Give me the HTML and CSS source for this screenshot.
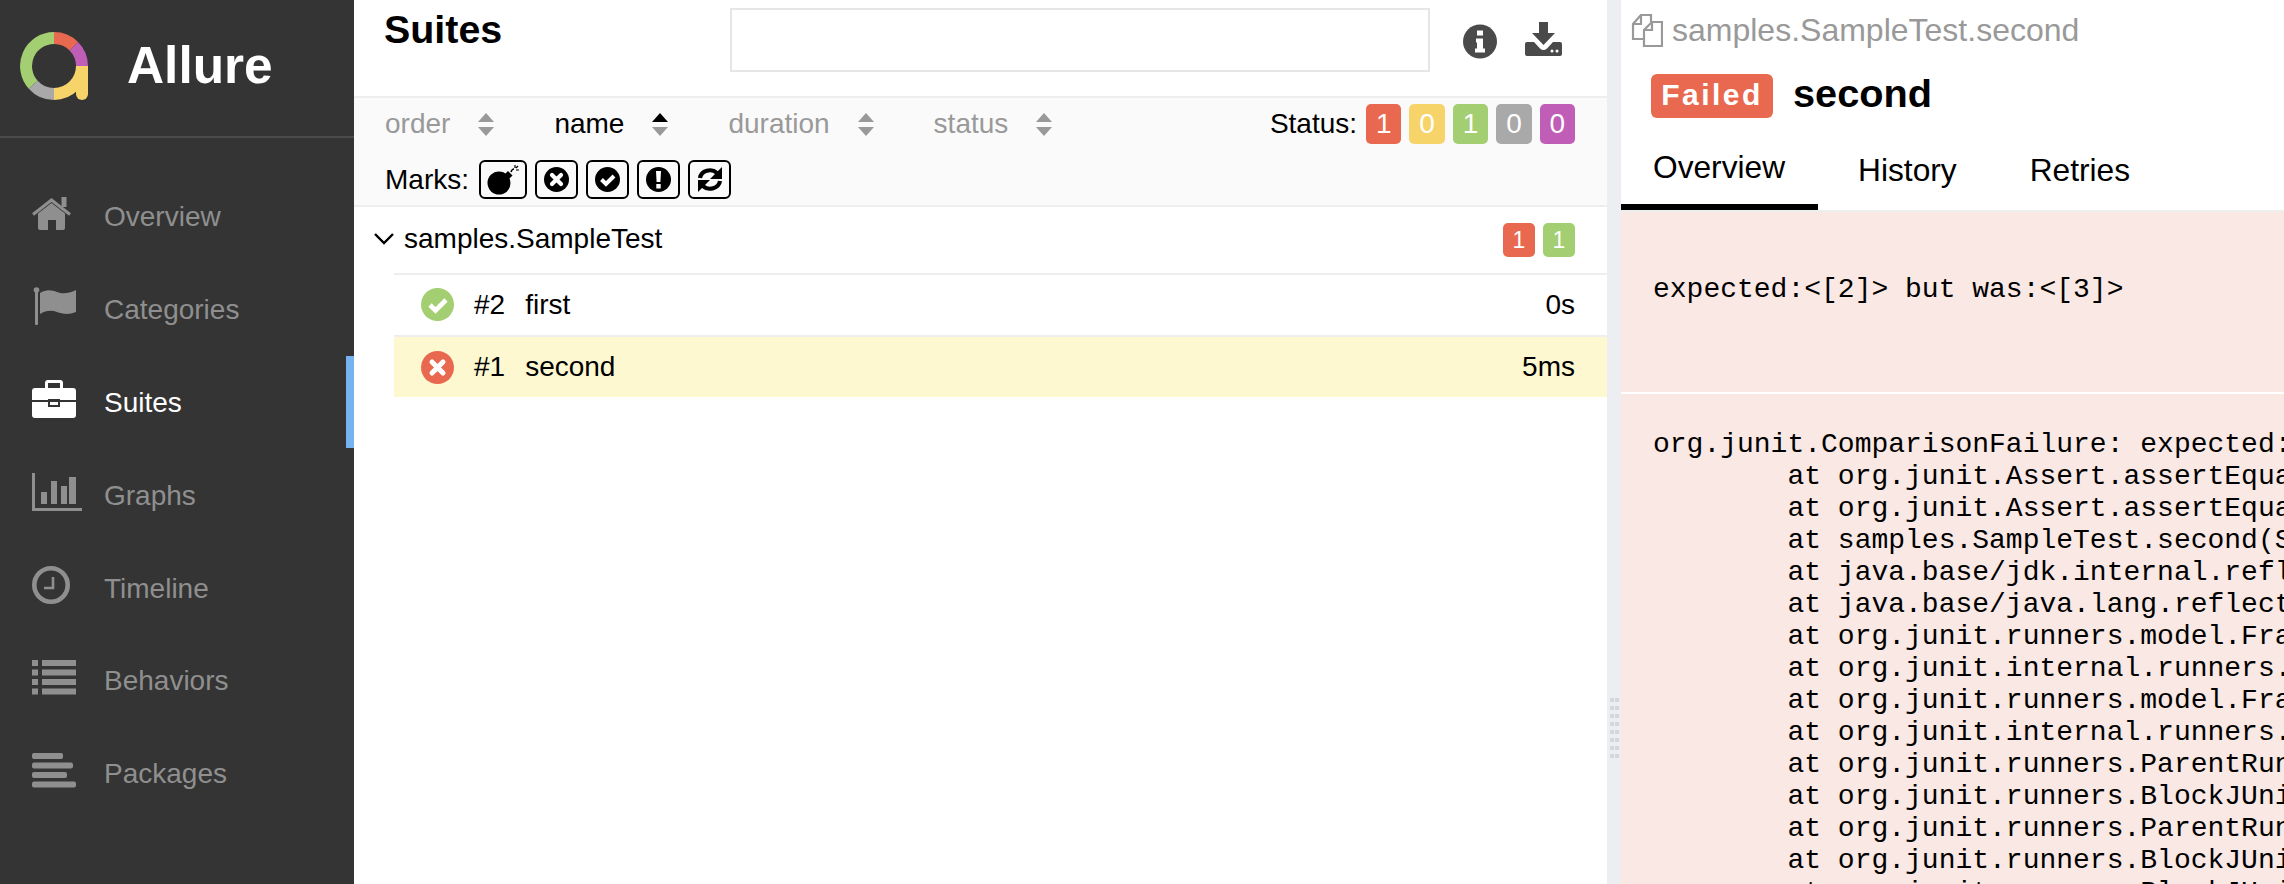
FILE: index.html
```html
<!DOCTYPE html>
<html lang="en">
<head>
<meta charset="utf-8">
<title>Allure</title>
<link rel="stylesheet" href="styles.css">
</head>
<body>
<div class="app">
  <aside class="side">
    <div class="brand">
      <svg class="logo" viewBox="0 0 68 68" fill="none" stroke-width="12">
        <path d="M34 6A28 28 0 0 0 13.2 52.7" stroke="#a3ce71"/>
        <path d="M13.2 52.7A28 28 0 0 0 34 62" stroke="#a9a9a9"/>
        <path d="M34 6A28 28 0 0 1 53.8 14.2" stroke="#e96950"/>
        <path d="M53.8 14.2A28 28 0 0 1 62 34" stroke="#c05db7"/>
        <path d="M62 34A28 28 0 0 1 34 62" stroke="#f7d46a"/>
        <path d="M56 34h12v28a6 6 0 0 1-12 0z" fill="#f7d46a" stroke="none"/>
      </svg>
      <span class="brand-name">Allure</span>
    </div>
    <nav class="nav">
      <a class="nav-item">
        <span class="nav-icon"><svg width="39" height="33" viewBox="0 0 39 33" fill="currentColor"><path d="M6 16.500 19.500 6 33 16.500V31a2 2 0 0 1-2 2H24V23H16V33H8a2 2 0 0 1-2-2z"/><path d="M1 17.500 19.500 3 38 17.500" fill="none" stroke="currentColor" stroke-width="3"/><rect x="29.500" width="5" height="10"/></svg></span>
        <span>Overview</span>
      </a>
      <a class="nav-item">
        <span class="nav-icon"><svg width="44" height="38" viewBox="0 0 44 38" fill="currentColor"><circle cx="4.500" cy="3" r="2.800"/><rect x="3" y="3" width="3" height="35" rx="1"/><path d="M8 6C14 2 20 3 25 5S36 7 44 3V25C37 28 30 27 25 25S14 23 8 27Z"/></svg></span>
        <span>Categories</span>
      </a>
      <a class="nav-item active">
        <span class="nav-icon"><svg width="44" height="38" viewBox="0 0 44 38" fill="currentColor"><path d="M13 9V3a3 3 0 0 1 3-3h12a3 3 0 0 1 3 3v6h-3V3H16v6z"/><path d="M3 8h38a3 3 0 0 1 3 3v9H28v-1H16v1H0v-9a3 3 0 0 1 3-3z"/><path d="M0 22h16v5h12v-5h16v13a3 3 0 0 1-3 3H3a3 3 0 0 1-3-3z"/><rect x="18" y="22" width="8" height="3"/></svg></span>
        <span>Suites</span>
      </a>
      <a class="nav-item">
        <span class="nav-icon"><svg width="50" height="38" viewBox="0 0 50 38" fill="currentColor"><path d="M0 0h3v35h47v3H0z"/><rect x="9" y="19" width="6" height="12"/><rect x="19" y="8" width="6" height="23"/><rect x="29" y="13" width="6" height="18"/><rect x="37" y="4" width="7" height="27"/></svg></span>
        <span>Graphs</span>
      </a>
      <a class="nav-item">
        <span class="nav-icon"><svg width="38" height="38" viewBox="0 0 38 38" fill="none" stroke="currentColor"><circle cx="19" cy="19" r="16.700" stroke-width="4.600"/><path d="M21 11V22H12" stroke-width="2.600"/></svg></span>
        <span>Timeline</span>
      </a>
      <a class="nav-item">
        <span class="nav-icon"><svg width="44" height="35" viewBox="0 0 44 35" fill="currentColor"><path d="M0 0h6v6H0zM10 0h34v6H10zM0 9.500h6v6H0zM10 9.500h34v6H10zM0 19h6v6H0zM10 19h34v6H10zM0 28.500h6v6H0zM10 28.500h34v6H10z"/></svg></span>
        <span>Behaviors</span>
      </a>
      <a class="nav-item">
        <span class="nav-icon"><svg width="44" height="35" viewBox="0 0 44 35" fill="currentColor"><rect width="31" height="6" rx="2"/><rect y="9.500" width="41" height="6" rx="2"/><rect y="19" width="35" height="6" rx="2"/><rect y="28.500" width="44" height="6" rx="2"/></svg></span>
        <span>Packages</span>
      </a>
    </nav>
  </aside>

  <main class="middle">
    <header class="mid-head">
      <h1 class="mid-title">Suites</h1>
      <div class="search"></div>
      <svg class="head-icon info" viewBox="0 0 34 34"><circle cx="17" cy="17" r="17" fill="#4a4a4a"/><path d="M13 14h7v10h2v4H12v-4h2v-6h-1zM14 6h6v5h-6z" fill="#fff"/></svg>
      <svg class="head-icon download" viewBox="0 0 37 34" fill="#4a4a4a"><path d="M14 0h9v11h7L18.500 23 7 11h7z"/><path d="M2 20h7l6 6.500q3.500 3 7 0l6-6.500h7a2 2 0 0 1 2 2v10a2 2 0 0 1-2 2H2a2 2 0 0 1-2-2V22a2 2 0 0 1 2-2z"/><circle cx="27" cy="29" r="1.500" fill="#fff"/><circle cx="32" cy="29" r="1.500" fill="#fff"/></svg>
    </header>
    <section class="controls">
      <div class="control-row">
        <div class="sorts">
          <span class="sort">order<i class="arrows"><b class="up"></b><b class="down"></b></i></span>
          <span class="sort current">name<i class="arrows"><b class="up"></b><b class="down"></b></i></span>
          <span class="sort">duration<i class="arrows"><b class="up"></b><b class="down"></b></i></span>
          <span class="sort">status<i class="arrows"><b class="up"></b><b class="down"></b></i></span>
        </div>
        <div class="status">
          <span class="status-label">Status:</span>
          <span class="badge failed">1</span>
          <span class="badge broken">0</span>
          <span class="badge passed">1</span>
          <span class="badge skipped">0</span>
          <span class="badge unknown">0</span>
        </div>
      </div>
      <div class="marks">
        <span class="marks-label">Marks:</span>
        <span class="mark wide"><svg width="34" height="32" viewBox="0 0 34 32"><circle cx="13" cy="19" r="11.500" fill="#000"/><path d="M19 10l3-3 4.500 4.500-3 3z" fill="#000"/><path d="M25 8q1-3 3-3" fill="none" stroke="#000" stroke-width="1.500"/><path d="M29 1v3M32 2l-2 2M33 6h-3" stroke="#000" stroke-width="1.200"/></svg></span>
        <span class="mark"><svg width="25" height="25" viewBox="0 0 25 25"><circle cx="12.500" cy="12.500" r="12.500"/><path d="M8 8l9 9M17 8l-9 9" stroke="#fff" stroke-width="4.200" stroke-linecap="round"/></svg></span>
        <span class="mark"><svg width="25" height="25" viewBox="0 0 25 25"><circle cx="12.500" cy="12.500" r="12.500"/><path d="M6.500 12.500l4.500 4.500 8-8" fill="none" stroke="#fff" stroke-width="4"/></svg></span>
        <span class="mark"><svg width="25" height="25" viewBox="0 0 25 25"><circle cx="12.500" cy="12.500" r="12.500"/><path d="M10 4h5l-.6 11h-3.800zM10.300 17h4.400v4.500h-4.400z" fill="#fff"/></svg></span>
        <span class="mark"><svg width="26" height="25" viewBox="0 0 26 25" fill="none" stroke="#000" stroke-width="4.200"><path d="M3 11a10 9 0 0 1 17-5"/><path d="M23 14a10 9 0 0 1-17 5"/><path d="M25 0v12H13z" fill="#000" stroke="none"/><path d="M1 25V13h12z" fill="#000" stroke="none"/></svg></span>
      </div>
    </section>
    <section class="tree">
      <div class="group">
        <svg class="chevron" viewBox="0 0 20 12" fill="none" stroke="#000" stroke-width="2.400"><path d="M1 1l9 9 9-9"/></svg>
        <span class="group-name">samples.SampleTest</span>
        <span class="badge small failed">1</span>
        <span class="badge small passed">1</span>
      </div>
      <div class="rows">
        <div class="row">
          <svg class="state" viewBox="0 0 33 33"><circle cx="16.500" cy="16.500" r="16.500" fill="#a3ce71"/><path d="M9 17l5.500 5.500L25 12" fill="none" stroke="#fff" stroke-width="4.600"/></svg>
          <span>#2</span><span>first</span><span class="time">0s</span>
        </div>
        <div class="row selected">
          <svg class="state" viewBox="0 0 33 33"><circle cx="16.500" cy="16.500" r="16.500" fill="#e96950"/><path d="M11 11l11 11M22 11L11 22" stroke="#fff" stroke-width="5" stroke-linecap="round"/></svg>
          <span>#1</span><span>second</span><span class="time">5ms</span>
        </div>
      </div>
    </section>
  </main>

  <div class="gutter">
    <svg class="grip" viewBox="0 0 9 60" fill="#d3d7db"><path d="M0 0h4v4H0zM5 0h4v4H5zM0 8h4v4H0zM5 8h4v4H5zM0 16h4v4H0zM5 16h4v4H5zM0 24h4v4H0zM5 24h4v4H5zM0 32h4v4H0zM5 32h4v4H5zM0 40h4v4H0zM5 40h4v4H5zM0 48h4v4H0zM5 48h4v4H5zM0 56h4v4H0zM5 56h4v4H5z"/></svg>
  </div>

  <section class="detail">
    <div class="path">
      <svg class="copy" viewBox="0 0 32 33" fill="none" stroke="#999" stroke-width="2.200"><path d="M12 25H2V10L10 1H20V8"/><path d="M10 1V10H2"/><path d="M21 8H31V32H13V16Z"/><path d="M21 8V16H13"/></svg>
      <span>samples.SampleTest.second</span>
    </div>
    <div class="title">
      <span class="failed-tag">Failed</span>
      <span class="test-name">second</span>
    </div>
    <div class="tabs">
      <span class="tab on">Overview</span>
      <span class="tab">History</span>
      <span class="tab">Retries</span>
    </div>
    <pre class="message">expected:&lt;[2]&gt; but was:&lt;[3]&gt;</pre>
    <pre class="trace">org.junit.ComparisonFailure: expected:
	at org.junit.Assert.assertEquals
	at org.junit.Assert.assertEquals
	at samples.SampleTest.second(SampleTest
	at java.base/jdk.internal.reflect
	at java.base/java.lang.reflect
	at org.junit.runners.model.FrameworkMethod
	at org.junit.internal.runners.model
	at org.junit.runners.model.FrameworkMethod
	at org.junit.internal.runners.model
	at org.junit.runners.ParentRunner
	at org.junit.runners.BlockJUnit4ClassRunner
	at org.junit.runners.ParentRunner
	at org.junit.runners.BlockJUnit4ClassRunner
	at org.junit.runners.BlockJUnit4ClassRunner</pre>
  </section>
</div>
</body>
</html>
```
FILE: styles.css
```css
* { box-sizing: border-box; }
html, body { margin: 0; height: 884px; overflow: hidden; background: #fff; }
body { font-family: "Liberation Sans", Arial, sans-serif; font-size: 28px; color: #000; }
.app { display: grid; grid-template-columns: 354px 1253px 14px 663px; height: 884px; }

/* sidebar */
.side { background: #343434; color: #8f8f8f; }
.brand { height: 138px; border-bottom: 2px solid #4b4b4b; display: flex; align-items: flex-start; padding: 32px 0 0 20px; }
.logo { width: 68px; height: 68px; flex: none; }
.brand-name { color: #fff; font-size: 51.4px; font-weight: 700; line-height: 66px; margin-left: 39px; }
.nav { padding-top: 32px; }
.nav-item { height: 92.8px; display: flex; align-items: center; padding-left: 32px; padding-top: 2px; }
.nav-item.active { color: #fff; box-shadow: inset -8px 0 0 #76b2f2; }
.nav-icon { width: 72px; flex: none; display: flex; margin-top: -8px; }

/* middle */
.middle { display: flex; flex-direction: column; min-width: 0; }
.mid-head { height: 98px; border-bottom: 2px solid #eeeeee; padding: 8px 0 0 30px; display: flex; align-items: flex-start; }
.mid-title { flex: 0 0 346px; margin: 0; font-size: 39.4px; line-height: 43px; font-weight: 700; }
.search { width: 700px; height: 64px; border: 2px solid #e6e6e6; }
.head-icon { flex: none; }
.info { width: 34px; height: 35px; margin: 16px 0 0 33px; }
.download { width: 37px; height: 34px; margin: 14px 0 0 28px; }
.controls { height: 109px; background: #fafafa; border-bottom: 2px solid #eeeeee; padding: 6px 32px 0 31px; }
.control-row { display: flex; align-items: center; justify-content: space-between; height: 40px; }
.sorts { display: flex; gap: 60px; color: #999; }
.sort { display: flex; align-items: center; }
.sort.current { color: #000; }
.arrows { display: flex; flex-direction: column; gap: 5px; margin-left: 28px; font-style: normal; }
.arrows .up { width: 0; height: 0; border: 8.500px solid transparent; border-top: 0; border-bottom: 9px solid #999; }
.arrows .down { width: 0; height: 0; border: 8.500px solid transparent; border-bottom: 0; border-top: 9px solid #999; }
.current .up { border-bottom-color: #000; }
.status { display: flex; align-items: center; gap: 8px; }
.status-label { margin-right: 1px; }
.badge { width: 35.4px; height: 40px; border-radius: 5px; color: #fff; display: flex; align-items: center; justify-content: center; }
.badge.small { width: 32px; height: 34px; font-size: 23px; }
.failed { background: #e96950; }
.broken { background: #f7d46a; }
.passed { background: #a3ce71; }
.skipped { background: #a9a9a9; }
.unknown { background: #c05db7; }
.marks { display: flex; align-items: center; gap: 8px; margin-top: 16px; }
.marks-label { margin-right: 2px; }
.mark { width: 43px; height: 39px; border: 2px solid #000; border-radius: 6px; display: flex; align-items: center; justify-content: center; }
.mark.wide { width: 48px; }

/* tree */
.group { height: 66px; display: flex; align-items: center; gap: 8px; padding: 0 32px 0 20px; }
.chevron { width: 20px; height: 12px; flex: none; margin-top: -3px; }
.group-name { flex: 1; margin-left: 2px; margin-top: -3px; }
.rows { margin-left: 40px; border-top: 2px solid #eeeeee; }
.row { height: 62px; padding: 0 32px 1px 27px; border-bottom: 2px solid #eeeeee; display: flex; align-items: center; gap: 20px; }
.row.selected { background: #fdf8d0; border-bottom: 0; height: 60px; padding-bottom: 0; }
.state { width: 33px; height: 33px; flex: none; }
.time { margin-left: auto; }

/* gutter */
.gutter { background: #eceef1; display: flex; justify-content: center; padding-top: 698px; }
.grip { width: 9px; height: 60px; flex: none; }

/* detail */
.detail { min-width: 0; overflow: hidden; }
.path { height: 60px; display: flex; align-items: center; gap: 9px; padding-left: 10px; color: #999; font-size: 32px; }
.copy { width: 32px; height: 33px; flex: none; }
.title { height: 72px; display: flex; align-items: center; gap: 21px; padding: 0 0 3px 30px; }
.failed-tag { width: 122px; height: 44px; margin-top: 3px; background: #e96950; color: #fff; border-radius: 6px; font-size: 30px; font-weight: 700; letter-spacing: 2.5px; display: flex; align-items: center; justify-content: center; padding-bottom: 2px; }
.test-name { font-size: 39.7px; font-weight: 700; margin-top: -2px; margin-left: -1px; }
.tabs { height: 80px; display: flex; gap: 8px; border-bottom: 2px solid #eeeeee; font-size: 31.7px; }
.tab { padding: 0 33px 2px 32px; display: flex; align-items: center; }
.tab.on { border-bottom: 6px solid #000; }
.message, .trace { margin: 0; background: #f9e8e4; font-family: "Liberation Mono", "Courier New", monospace; font-size: 28px; line-height: 32px; tab-size: 8; white-space: pre; padding-left: 32px; overflow: hidden; }
.message { height: 180px; padding-top: 62px; }
.trace { margin-top: 2px; padding-top: 35px; height: 490px; }
```
